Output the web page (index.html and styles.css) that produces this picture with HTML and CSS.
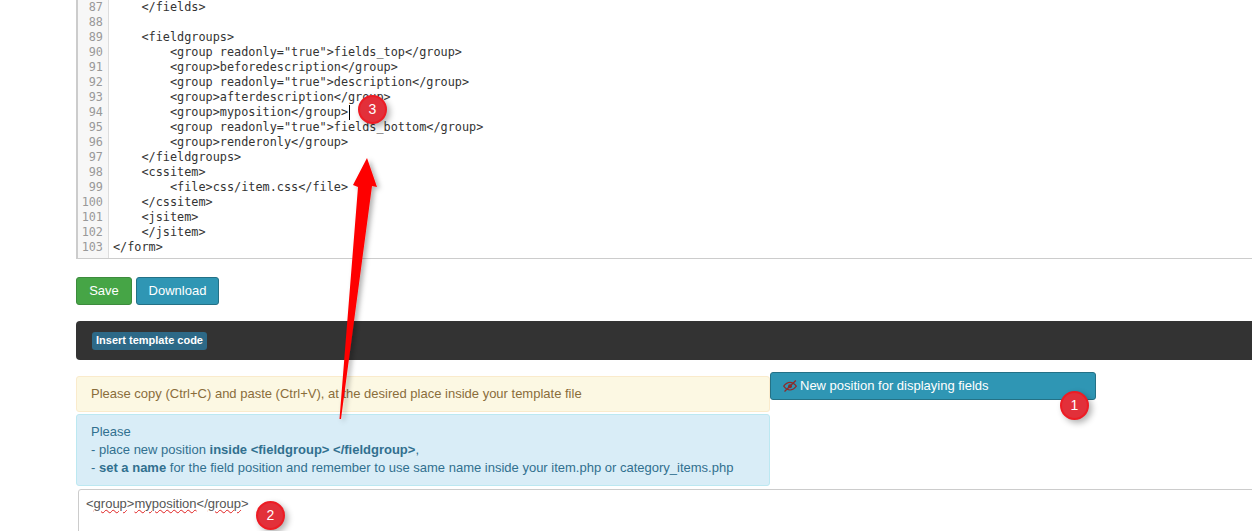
FILE: index.html
```html
<!DOCTYPE html>
<html lang="en">
<head>
<meta charset="utf-8">
<title>Template editor</title>
<link rel="stylesheet" href="styles.css">
</head>
<body>
<main class="page">
  <section class="editor">
    <div class="gutter">87
88
89
90
91
92
93
94
95
96
97
98
99
100
101
102
103</div>
    <pre class="code">    &lt;/fields&gt;

    &lt;fieldgroups&gt;
        &lt;group readonly="true"&gt;fields_top&lt;/group&gt;
        &lt;group&gt;beforedescription&lt;/group&gt;
        &lt;group readonly="true"&gt;description&lt;/group&gt;
        &lt;group&gt;afterdescription&lt;/group&gt;
        &lt;group&gt;myposition&lt;/group&gt;<span class="caret"></span>
        &lt;group readonly="true"&gt;fields_bottom&lt;/group&gt;
        &lt;group&gt;renderonly&lt;/group&gt;
    &lt;/fieldgroups&gt;
    &lt;cssitem&gt;
        &lt;file&gt;css/item.css&lt;/file&gt;
    &lt;/cssitem&gt;
    &lt;jsitem&gt;
    &lt;/jsitem&gt;
&lt;/form&gt;</pre>
  </section>

  <div class="actions">
    <button class="btn btn-save">Save</button>
    <button class="btn btn-info">Download</button>
  </div>

  <div class="darkbar"><span class="label">Insert template code</span></div>

  <div class="columns">
    <div class="notes">
      <div class="alert alert-warning">Please copy (Ctrl+C) and paste (Ctrl+V), at the desired place inside your template file</div>
      <div class="alert alert-info">Please<br>- place new position <b>inside &lt;fieldgroup&gt; &lt;/fieldgroup&gt;</b>,<br>- <b>set a name</b> for the field position and remember to use same name inside your item.php or category_items.php</div>
    </div>
    <button class="newpos">
      <svg class="eye" viewBox="0 0 14 12" aria-hidden="true">
        <path d="M0.700 6.200C2.600 3.600 4.700 2.400 7 2.400s4.400 1.200 6.300 3.800C11.400 8.800 9.300 10 7 10S2.600 8.800 0.700 6.200Z" fill="none" stroke="#8e2b2b" stroke-width="1.200"/>
        <circle cx="7" cy="6.200" r="2" fill="#8e2b2b"/>
        <path d="M1.500 11.500L12.800 0.500" stroke="#8e2b2b" stroke-width="1.300"/>
      </svg>
      New position for displaying fields
    </button>
  </div>

  <div class="snippet">&lt;<span class="typo">group</span>&gt;<span class="typo">myposition</span>&lt;/<span class="typo">group</span>&gt;</div>
</main>

<svg class="arrow" viewBox="0 0 1252 531" aria-hidden="true">
  <defs>
    <filter id="soft" x="-50%" y="-10%" width="200%" height="120%">
      <feDropShadow dx="3" dy="2" stdDeviation="2.500" flood-color="#000" flood-opacity="0.300"/>
    </filter>
  </defs>
  <path d="M339.500 419L358 187L353 185L367 158L377 187L372 186L341 419Z" fill="#fe0000" filter="url(#soft)"/>
</svg>
<span class="badge badge-1">1</span>
<span class="badge badge-2">2</span>
<span class="badge badge-3">3</span>
</body>
</html>
```

FILE: styles.css
```css
* { box-sizing: border-box; }
html, body { margin: 0; height: 531px; overflow: hidden; background: #fff; }
body { font-family: "Liberation Sans", Arial, sans-serif; font-size: 13px; color: #333; position: relative; }
.page { padding-left: 76px; width: 1400px; }

.editor { display: flex; width: 1324px; height: 259px; border: solid #ccc; border-width: 0 0 1px 2px; }
.gutter { width: 31px; padding: 0 5px 0 0; background: #f7f7f7; border-right: 1px solid #ddd; color: #999; font: 11.830px/15px "DejaVu Sans Mono", monospace; text-align: right; white-space: pre; }
.code { margin: 0; padding: 0 0 0 4px; font: 11.830px/15px "DejaVu Sans Mono", monospace; color: #333; }
.caret { display: inline-block; width: 1px; height: 15px; background: #000; vertical-align: top; margin-left: 1px; }

.actions { display: flex; gap: 4px; margin-top: 18px; }
.btn { height: 28px; padding: 0; border-radius: 3px; font: 13px/26px "Liberation Sans", Arial, sans-serif; color: #fff; border: 1px solid; }
.btn-save { width: 56px; background: #46a546; border-color: #3d8b3d; }
.btn-info { width: 83px; background: #2f96b4; border-color: #247186; }

.darkbar { display: flex; align-items: center; width: 1324px; height: 39px; margin-top: 16px; padding-left: 16px; background: #333; border-radius: 4px 0 0 4px; }
.label { height: 18px; padding: 0 4px; background: #2d6987; border-radius: 3px; color: #fff; font: bold 11px/16px "Liberation Sans", Arial, sans-serif; }

.columns { display: flex; align-items: flex-start; margin-top: 12px; }
.notes { width: 694px; padding-top: 4px; display: flex; flex-direction: column; gap: 2px; }
.alert { padding: 0 14px; border: 1px solid; border-radius: 3px; font-size: 13px; line-height: 18px; }
.alert-warning { height: 36px; line-height: 33px; background: #fcf8e3; border-color: #faebcc; color: #8a6d3b; }
.alert-info { height: 72px; padding-top: 8px; background: #d9edf7; border-color: #bce8f1; color: #31708f; }
.newpos { display: flex; align-items: center; gap: 3px; width: 326px; height: 28px; padding: 0 12px; background: #2f96b4; border: 1px solid #247186; border-radius: 3px; color: #fff; font: 13px/26px "Liberation Sans", Arial, sans-serif; }
.eye { width: 14px; height: 12px; }

.snippet { width: 1324px; height: 60px; margin: 3px 0 0 2px; padding: 6px 7px; border: 1px solid #ccc; border-radius: 3px 0 0 0; font-size: 13px; line-height: 16px; color: #555; }
.typo { text-decoration: underline wavy #e02020 1px; text-underline-offset: 1px; }

.arrow { position: absolute; left: 0; top: 0; width: 1252px; height: 531px; pointer-events: none; }
.badge { position: absolute; width: 29px; height: 29px; border-radius: 50%; background: #e2303a; border: 2px solid #ed1c24; color: #fff; font: 14px/25px "Liberation Sans", Arial, sans-serif; text-align: center; box-shadow: 3px 3px 6px rgba(0,0,0,.3); }
.badge-1 { left: 1060px; top: 391px; }
.badge-2 { left: 256px; top: 501px; }
.badge-3 { left: 358px; top: 95px; }
```
